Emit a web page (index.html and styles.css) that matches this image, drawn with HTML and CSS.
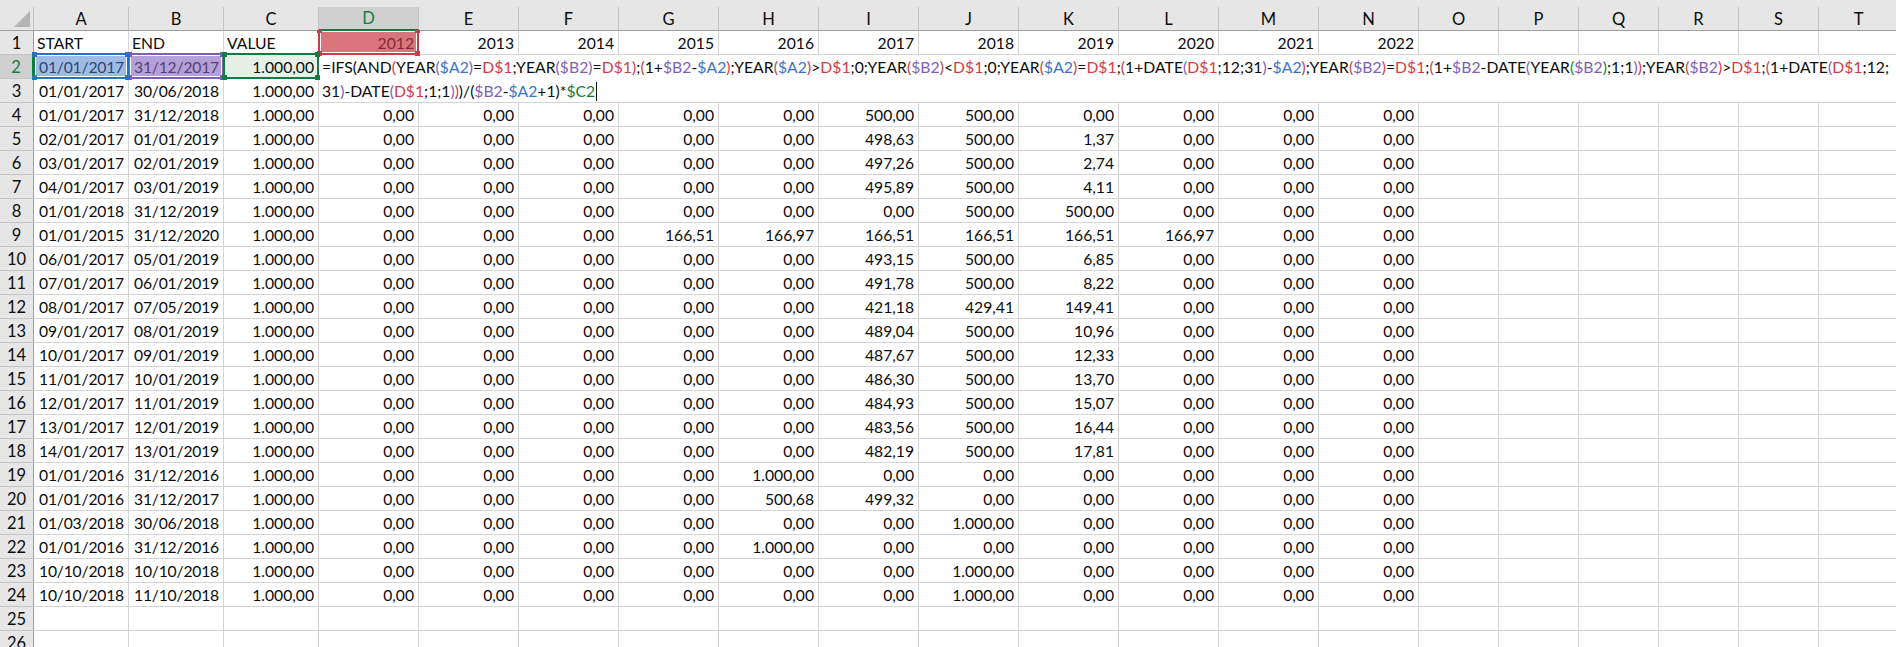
FILE: index.html
```html
<!DOCTYPE html>
<html lang="en">
<head>
    <meta charset="UTF-8">
    <title>Sheet1</title>
    <link rel="stylesheet" href="styles.css">
</head>
<body>
    <div class="sheet">
        <div class="top-band"></div>
        <table class="grid" id="grid"></table>
        <svg class="corner" width="16" height="16" viewBox="0 0 16 16"><polygon points="16,0 16,16 0,16" fill="#b4b4b4"/></svg>
        <div class="formula" id="formula">=IFS(AND<span class="p2">(</span>YEAR<span class="p3">(</span><span class="ref-a">$A2</span><span class="p3">)</span>=<span class="ref-d">D$1</span>;YEAR<span class="p3">(</span><span class="ref-b">$B2</span><span class="p3">)</span>=<span class="ref-d">D$1</span><span class="p2">)</span>;<span class="p2">(</span>1+<span class="ref-b">$B2</span>-<span class="ref-a">$A2</span><span class="p2">)</span>;YEAR<span class="p2">(</span><span class="ref-a">$A2</span><span class="p2">)</span>&gt;<span class="ref-d">D$1</span>;0;YEAR<span class="p2">(</span><span class="ref-b">$B2</span><span class="p2">)</span>&lt;<span class="ref-d">D$1</span>;0;YEAR<span class="p2">(</span><span class="ref-a">$A2</span><span class="p2">)</span>=<span class="ref-d">D$1</span>;<span class="p2">(</span>1+DATE<span class="p3">(</span><span class="ref-d">D$1</span>;12;31<span class="p3">)</span>-<span class="ref-a">$A2</span><span class="p2">)</span>;YEAR<span class="p2">(</span><span class="ref-b">$B2</span><span class="p2">)</span>=<span class="ref-d">D$1</span>;<span class="p2">(</span>1+<span class="ref-b">$B2</span>-DATE<span class="p3">(</span>YEAR<span class="p4">(</span><span class="ref-b">$B2</span><span class="p4">)</span>;1;1<span class="p3">)</span><span class="p2">)</span>;YEAR<span class="p2">(</span><span class="ref-b">$B2</span><span class="p2">)</span>&gt;<span class="ref-d">D$1</span>;<span class="p2">(</span>1+DATE<span class="p3">(</span><span class="ref-d">D$1</span>;12;<br><span class="line-two">31<span class="p3">)</span>-DATE<span class="p3">(</span><span class="ref-d">D$1</span>;1;1<span class="p3">)</span><span class="p2">)</span>)/(<span class="ref-b">$B2</span>-<span class="ref-a">$A2</span>+1)*<span class="ref-c">$C2</span></span><span class="caret"></span></div>
    </div>
    <script src="script.js"></script>
</body>
</html>
```

FILE: styles.css
```css
* {
    margin: 0;
    padding: 0;
    box-sizing: border-box;
}

body {
    font-family: 'Lato', 'Liberation Sans', sans-serif;
    font-size: 15.7px;
    color: #0c0c0c;
    background: white;
    overflow: hidden;
}

.sheet {
    position: relative;
    height: 647px;
    overflow: hidden;
}

.top-band {
    height: 7px;
    background: #e6e6e6;
}

.grid {
    border-collapse: separate;
    border-spacing: 0;
    table-layout: fixed;
    width: 1899px;
}

.grid th {
    font-weight: normal;
    background: #e6e6e6;
    font-size: 16.5px;
}

.col-head th {
    height: 24px;
    border-right: 1px solid #c4c4c4;
    border-bottom: 1px solid #9f9f9f;
}

.col-head th.active {
    background: #d0d0d0;
    color: #107c41;
    border-bottom: 2px solid #107c41;
}

.grid tr td, .grid tbody th {
    height: 24px;
}

.grid tbody th {
    border-right: 1px solid #9f9f9f;
    border-bottom: 1px solid #c4c4c4;
}

.grid tbody th.active {
    background: #d0d0d0;
    color: #107c41;
    border-right: 2px solid #107c41;
}

.grid td {
    border-right: 1px solid #d4d4d4;
    border-bottom: 1px solid #d4d4d4;
    padding: 0 4px 0 3px;
    text-align: right;
    white-space: nowrap;
    overflow: visible;
}

.grid td.text {
    text-align: left;
}

.grid td.date {
    letter-spacing: -0.2px;
}

/* colored ranges while editing D2 */
.grid td.range {
    position: relative;
}

.range-a { background: #9fbbe4; color: #2c4775; z-index: 4; }
.range-b { background: #b5a1d7; color: #54407a; z-index: 1; }
.range-c { background: #e5f0e7; z-index: 3; }
.range-d { background: #d9767c; color: #852a33; z-index: 2; }

.outline {
    position: absolute;
    inset: -2px -1px -1px -1px;
    border: 2px solid;
    box-shadow: inset 0 0 0 1px white;
    pointer-events: none;
}

.range-a .outline { border-color: #2e6fc6; border-left-color: #107c41; }
.range-b .outline { border-color: #7f5fb4; }
.range-c .outline { border-color: #107c41; box-shadow: none; }
.range-d .outline { border-color: #cf3a48; border-top-color: transparent; }

.handle {
    position: absolute;
    width: 5px;
    height: 5px;
}

.range-a .handle { background: #2e6fc6; }
.range-b .handle { background: #7f5fb4; }
.range-c .handle { background: #107c41; }
.range-d .handle { background: #cf3a48; }
.range-d .handle.tl, .range-d .handle.tr { height: 3px; top: -1px; }

.handle.tl { left: -3px; top: -3px; }
.handle.tr { right: -3px; top: -3px; }
.handle.bl { left: -3px; bottom: -3px; }
.handle.br { right: -3px; bottom: -3px; }

/* in-cell editor lies over D2:T3 */
.formula {
    position: absolute;
    left: 320px;
    top: 55px;
    width: 1576px;
    height: 47px;
    padding-left: 2px;
    background: white;
    line-height: 24px;
    white-space: nowrap;
    letter-spacing: 0.05px;
}

.line-two {
    letter-spacing: 0;
}

.caret {
    display: inline-block;
    width: 1px;
    height: 19px;
    background: #111;
    vertical-align: -4px;
    margin-left: 1px;
}

.p2 { color: #c8404c; }
.p3 { color: #7f5fb4; }
.p4 { color: #14843f; }
.ref-a { color: #3a73cc; }
.ref-b { color: #7f5fb4; }
.ref-c { color: #107c41; }
.ref-d { color: #d63a46; }

.corner {
    position: absolute;
    left: 14px;
    top: 11px;
}
```

FILE: script.js
```js
const letters = 'ABCDEFGHIJKLMNOPQRST'.split('');
const widths = [34, 95, 95, 95];
for (let i = 0; i < 11; i++) widths.push(100);
for (let i = 0; i < 6; i++) widths.push(80);

const years = ['2012', '2013', '2014', '2015', '2016', '2017', '2018', '2019', '2020', '2021', '2022'];
const Z = '0,00';
const K = '1.000,00';
const H = '500,00';

// start, end, then the amounts that are not zero keyed by column letter
const rows = [
    ['01/01/2017', '31/12/2017', null],
    ['01/01/2017', '30/06/2018', null],
    ['01/01/2017', '31/12/2018', { I: H, J: H }],
    ['02/01/2017', '01/01/2019', { I: '498,63', J: H, K: '1,37' }],
    ['03/01/2017', '02/01/2019', { I: '497,26', J: H, K: '2,74' }],
    ['04/01/2017', '03/01/2019', { I: '495,89', J: H, K: '4,11' }],
    ['01/01/2018', '31/12/2019', { J: H, K: H }],
    ['01/01/2015', '31/12/2020', { G: '166,51', H: '166,97', I: '166,51', J: '166,51', K: '166,51', L: '166,97' }],
    ['06/01/2017', '05/01/2019', { I: '493,15', J: H, K: '6,85' }],
    ['07/01/2017', '06/01/2019', { I: '491,78', J: H, K: '8,22' }],
    ['08/01/2017', '07/05/2019', { I: '421,18', J: '429,41', K: '149,41' }],
    ['09/01/2017', '08/01/2019', { I: '489,04', J: H, K: '10,96' }],
    ['10/01/2017', '09/01/2019', { I: '487,67', J: H, K: '12,33' }],
    ['11/01/2017', '10/01/2019', { I: '486,30', J: H, K: '13,70' }],
    ['12/01/2017', '11/01/2019', { I: '484,93', J: H, K: '15,07' }],
    ['13/01/2017', '12/01/2019', { I: '483,56', J: H, K: '16,44' }],
    ['14/01/2017', '13/01/2019', { I: '482,19', J: H, K: '17,81' }],
    ['01/01/2016', '31/12/2016', { H: K }],
    ['01/01/2016', '31/12/2017', { H: '500,68', I: '499,32' }],
    ['01/03/2018', '30/06/2018', { J: K }],
    ['01/01/2016', '31/12/2016', { H: K }],
    ['10/10/2018', '10/10/2018', { J: K }],
    ['10/10/2018', '11/10/2018', { J: K }]
];

function cell(tr, text, cls) {
    const td = document.createElement('td');
    td.textContent = text;
    if (cls) td.className = cls;
    tr.appendChild(td);
    return td;
}

function markRange(td, name) {
    td.classList.add('range', 'range-' + name);
    const outline = document.createElement('div');
    outline.className = 'outline';
    ['tl', 'tr', 'bl', 'br'].forEach(pos => {
        const h = document.createElement('span');
        h.className = 'handle ' + pos;
        outline.appendChild(h);
    });
    td.appendChild(outline);
}

function buildGrid() {
    const grid = document.getElementById('grid');

    const colgroup = document.createElement('colgroup');
    widths.forEach(w => {
        const col = document.createElement('col');
        col.style.width = w + 'px';
        colgroup.appendChild(col);
    });
    grid.appendChild(colgroup);

    const thead = document.createElement('thead');
    const head = document.createElement('tr');
    head.className = 'col-head';
    head.appendChild(document.createElement('th'));
    letters.forEach(l => {
        const th = document.createElement('th');
        th.textContent = l;
        if (l === 'D') th.className = 'active';
        head.appendChild(th);
    });
    thead.appendChild(head);
    grid.appendChild(thead);

    const tbody = document.createElement('tbody');
    for (let n = 1; n <= 26; n++) {
        const tr = document.createElement('tr');
        const th = document.createElement('th');
        th.textContent = n;
        if (n === 2) th.className = 'active';
        tr.appendChild(th);

        if (n === 1) {
            cell(tr, 'START', 'text');
            cell(tr, 'END', 'text');
            cell(tr, 'VALUE', 'text');
            letters.slice(3).forEach((l, i) => {
                const td = cell(tr, years[i] || '');
                if (l === 'D') markRange(td, 'd');
            });
        } else if (n <= 24) {
            const [start, end, vals] = rows[n - 2];
            const a = cell(tr, start, 'date');
            const b = cell(tr, end, 'date');
            const c = cell(tr, K);
            if (n === 2) {
                markRange(a, 'a');
                markRange(b, 'b');
                markRange(c, 'c');
            }
            letters.slice(3).forEach((l, i) => {
                if (i > 10 || !vals) return cell(tr, '');
                cell(tr, vals[l] || Z);
            });
        } else {
            letters.forEach(() => cell(tr, ''));
        }
        tbody.appendChild(tr);
    }
    grid.appendChild(tbody);
}

buildGrid();
```
